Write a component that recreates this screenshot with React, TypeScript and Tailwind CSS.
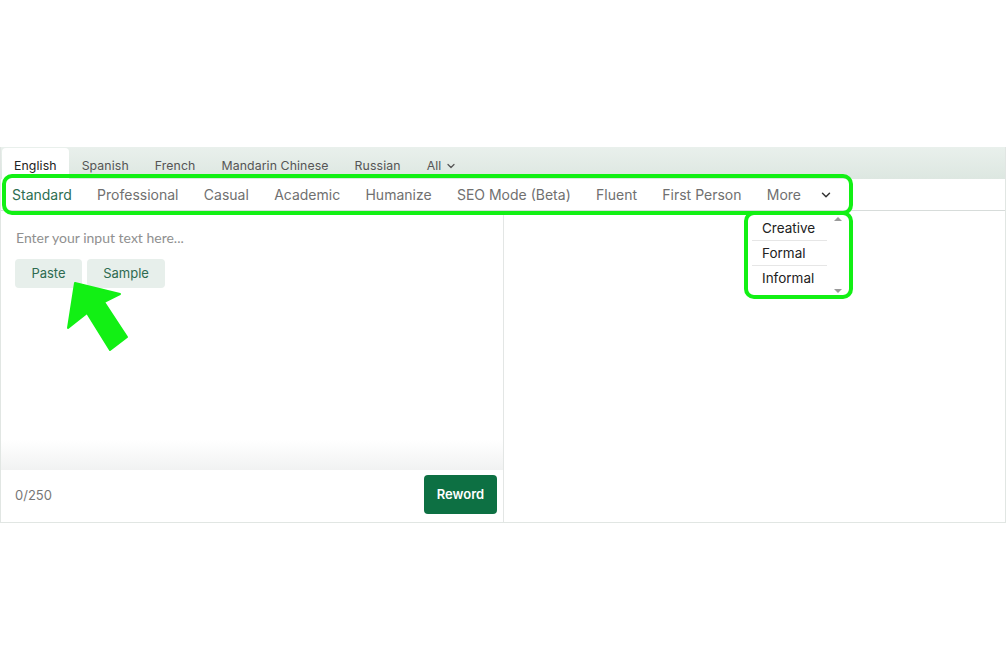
import { ChevronDown } from "lucide-react";

const languages = ["English", "Spanish", "French", "Mandarin Chinese", "Russian"];
const modes = [
  "Standard",
  "Professional",
  "Casual",
  "Academic",
  "Humanize",
  "SEO Mode (Beta)",
  "Fluent",
  "First Person",
  "More",
];
const moreOptions = ["Creative", "Formal", "Informal"];

function Arrow() {
  return (
    <svg
      className="absolute left-[60px] top-[278px]"
      width="80"
      height="80"
      viewBox="60 278 80 80"
    >
      <polygon
        points="75,283 68,328 87,313 110,350 127,337 104,302 120,294"
        fill="#12f014"
        stroke="#12f014"
        strokeWidth="2"
        strokeLinejoin="round"
      />
    </svg>
  );
}

export default function App() {
  return (
    <div
      className="relative w-full h-[671px] bg-white pt-[147px]"
      style={{ fontFamily: "Inter, 'Liberation Sans', sans-serif" }}
    >
      <div className="w-[1006px] border border-t-0 border-[#e1e6e3] bg-white">
        {/* language tabs */}
        <div className="flex h-8 items-end bg-gradient-to-b from-[#e9f0ec] to-[#dde7e1] pl-[1px] text-[12.3px] tracking-[0.1px] text-[#3d3d3d]">
          {languages.map((lang, i) => (
            <div
              key={lang}
              className={
                i === 0
                  ? "flex h-[31px] items-end rounded-t-[4px] bg-white px-3 pb-[4px] text-[#222]"
                  : "flex h-[31px] items-end px-[13px] pb-[4px] text-[#555]"
              }
            >
              {lang}
            </div>
          ))}
          <div className="flex h-[31px] items-end gap-1 px-[13px] pb-[4px] text-[#555]">
            All
            <ChevronDown className="mb-[3px] h-3 w-3" strokeWidth={2.5} />
          </div>
        </div>

        {/* modes */}
        <div className="flex h-8 items-center gap-[25.3px] border-b border-[#d7dcda] pl-[11px] text-[14px] text-[#707070]">
          {modes.map((m, i) => (
            <span key={m} className={i === 0 ? "text-[#2d6e51]" : ""}>
              {m}
            </span>
          ))}
          <ChevronDown className="-ml-[7px] h-[14px] w-[14px] text-[#333]" strokeWidth={2.5} />
        </div>

        {/* editors */}
        <div className="flex h-[311px]">
          <div className="flex w-[503px] flex-col border-r border-[#e3e6e5]">
            <div className="flex flex-1 flex-col px-[14px] pt-[16px]">
              <p className="pl-[1px] text-[14px] text-[#909090]" style={{ fontFamily: "Lato, Inter, sans-serif" }}>
                Enter your input text here...
              </p>
              <div className="mt-[11px] flex gap-[5px] text-[13px] text-[#2e6b50]">
                <button className="h-[29px] w-[67px] rounded-[4px] bg-[#e7efeb]">Paste</button>
                <button className="h-[29px] w-[78px] rounded-[4px] bg-[#e7efeb]">Sample</button>
              </div>
              <div className="flex-1" />
            </div>
            <div className="h-[30px] bg-gradient-to-b from-white to-[#f1f2f2]" />
            <div className="flex h-[52px] items-start justify-between pl-[14px] pr-[6px] pt-[5px]">
              <span className="mt-[11px] text-[13px] text-[#777]">0/250</span>
              <button className="h-[39px] w-[73px] rounded-[4px] bg-[#0d7043] text-[13px] font-semibold text-white">
                Reword
              </button>
            </div>
          </div>
          <div className="flex-1" />
        </div>
      </div>

      {/* More dropdown */}
      <div className="absolute left-[750px] top-[216px] h-[78px] w-[95px] bg-white text-[13.5px] text-[#222]">
        <div className="flex flex-col px-[2px]">
          {moreOptions.map((o, i) => (
            <div
              key={o}
              className={
                i < 2
                  ? "w-[75px] border-b border-[#e6e6e6] py-[2px] pl-[10px] leading-[20px]"
                  : "w-[75px] py-[2px] pl-[10px] leading-[20px]"
              }
            >
              {o}
            </div>
          ))}
        </div>
        <div className="absolute right-[3px] top-[1px] h-0 w-0 border-x-[4px] border-b-[4px] border-x-transparent border-b-[#9a9a9a]" />
        <div className="absolute bottom-[1px] right-[3px] h-0 w-0 border-x-[4px] border-t-[4px] border-x-transparent border-t-[#9a9a9a]" />
      </div>

      {/* highlight annotations */}
      <div className="pointer-events-none absolute left-[2px] top-[174px] h-[41px] w-[851px] rounded-[10px] border-[4px] border-[#12f014]" />
      <div className="pointer-events-none absolute left-[744px] top-[211px] h-[88px] w-[109px] rounded-[10px] border-[4px] border-[#12f014]" />
      <Arrow />
    </div>
  );
}
